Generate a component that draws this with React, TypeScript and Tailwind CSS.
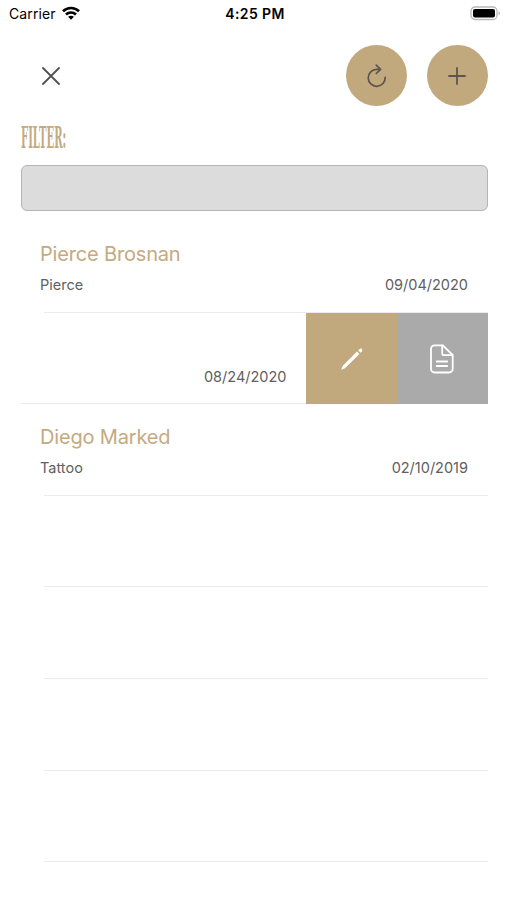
type Entry = { name?: string; kind?: string; date?: string; swiped?: boolean };

const entries: Entry[] = [
  { name: "Pierce Brosnan", kind: "Pierce", date: "09/04/2020" },
  { date: "08/24/2020", swiped: true },
  { name: "Diego Marked", kind: "Tattoo", date: "02/10/2019" },
  {},
  {},
  {},
  {},
];

function StatusBar() {
  return (
    <header className="grid h-7 grid-cols-3 items-center pr-[6px] pl-[9px] text-black">
      <div className="flex items-center gap-[6px]">
        <span className="text-[14px] leading-7 tracking-[0.1px]">Carrier</span>
        <svg className="mb-[2px]" width="18" height="14" viewBox="0 0 18 14" fill="none" stroke="currentColor" strokeWidth="2.7">
          <path d="M1 5.2C5.5.9 12.5.9 17 5.2" />
          <path d="M4 8.5c2.8-2.7 7.2-2.7 10 0" />
          <path d="M9 13.7 6.1 10.8c1.6-1.5 4.2-1.5 5.8 0Z" fill="currentColor" stroke="none" />
        </svg>
      </div>
      <span className="text-center text-[14px] leading-7 font-semibold tracking-[0.4px]">4:25 PM</span>
      <svg className="mb-[2px] justify-self-end" width="31" height="15" viewBox="0 0 31 15">
        <rect x="1" y="1" width="26" height="12.5" rx="4" fill="white" stroke="#b9b9b9" strokeWidth="1.3" />
        <rect x="3" y="3" width="22" height="8.6" rx="2" fill="black" />
        <path d="M28.5 5.2c2 .8 2 3.3 0 4.2Z" fill="#b5b5b5" />
      </svg>
    </header>
  );
}

function Toolbar() {
  return (
    <div className="mt-[17px] flex h-[61px] items-center pr-[19.5px] pl-[42px]">
      <button aria-label="Close">
        <svg width="18" height="18" viewBox="0 0 18 18" stroke="#505054" strokeWidth="1.8" strokeLinecap="round">
          <path d="m1 1 16 16M17 1 1 17" />
        </svg>
      </button>
      <div className="ml-auto flex gap-[19.5px]">
        <button aria-label="Reload" className="flex size-[61px] items-center justify-center rounded-full bg-[#c1a97d]">
          <svg width="20" height="24" viewBox="0 0 20 24" fill="none" stroke="#5b554c" strokeWidth="1.7" strokeLinecap="round" strokeLinejoin="round">
            <path d="M18.2 13.3A8.5 8.5 0 1 1 9.8 5.3H13" />
            <path d="m9.3 1.1 4.2 4.2-4.2 4.2" />
          </svg>
        </button>
        <button aria-label="Add" className="flex size-[61px] items-center justify-center rounded-full bg-[#c1a97d]">
          <svg width="18" height="18" viewBox="0 0 18 18" stroke="#5b554c" strokeWidth="1.8" strokeLinecap="round">
            <path d="M9 1v16M1 9h16" />
          </svg>
        </button>
      </div>
    </div>
  );
}

function SwipeActions() {
  return (
    <div className="flex h-full">
      <button aria-label="Edit" className="flex w-[91px] items-center justify-center bg-[#c1a97d] pt-[2px]">
        <svg width="24" height="24" viewBox="0 0 24 24" fill="white">
          <path d="m1.2 22.7 1.4-3.8L17 4.5l2.4 2.4L5 21.3Z" />
          <path d="m18.2 3.4 1.5-1.4c1.5-1.3 3.6.8 2.3 2.3l-1.4 1.5Z" />
        </svg>
      </button>
      <button aria-label="Notes" className="flex w-[90.5px] items-center justify-center bg-[#aaaaaa] pt-[2px]">
        <svg width="24" height="30" viewBox="0 0 24 30" fill="none" stroke="white" strokeWidth="1.8" strokeLinecap="round" strokeLinejoin="round">
          <path d="M4.5 1.3h8.3L22.7 11v14a3.5 3.5 0 0 1-3.5 3.5H4.5A3.5 3.5 0 0 1 1 25V4.8a3.5 3.5 0 0 1 3.5-3.5Z" />
          <path d="M12.2 1.5v7.7a2 2 0 0 0 2 2h8.2M6.7 17.5h10.5M6.7 22h10.5" />
        </svg>
      </button>
    </div>
  );
}

function Row({ entry }: { entry: Entry }) {
  if (entry.swiped) {
    return (
      <li className="flex h-[91.6px] justify-end">
        <div className="flex flex-1 items-start justify-end border-b border-[#e8e8e8] pt-[54px] pr-[19.5px]">
          <span className="text-[14.5px] leading-5 text-[#606060]">{entry.date}</span>
        </div>
        <SwipeActions />
      </li>
    );
  }
  return (
    <li className="flex h-[91.6px] flex-col pt-5">
      <h2 className="h-[27px] px-[19.5px] text-[20px] leading-[27px] font-normal tracking-[-0.17px] text-[#c3aa80]">
        {entry.name}
      </h2>
      <div className="mt-[7px] flex h-5 justify-between px-[19.5px] text-[14.5px] leading-5 text-[#606060]">
        <span>{entry.kind}</span>
        <span>{entry.date}</span>
      </div>
      <div className="mt-auto ml-[23.5px] border-b border-[#ececec]" />
    </li>
  );
}

export default function App() {
  return (
    <main className="h-[900px] w-[507px] overflow-hidden bg-white font-['Inter','Liberation_Sans',sans-serif]">
      <StatusBar />
      <Toolbar />
      <section className="mr-[19.5px] ml-[20.5px]">
        <div className="h-[59px] w-[45px] pt-[18px]">
          <label
            htmlFor="filter"
            className="block w-max origin-left scale-x-[0.335] font-['DejaVu_Serif',serif] text-[30px] leading-[28px] font-bold text-[#c3aa80]"
          >
            FILTER:
          </label>
        </div>
        <input
          id="filter"
          className="block h-[46px] w-full rounded-[6px] border border-[#b4b4b4] bg-[#dcdcdc] px-3 outline-none"
        />
        <ul className="mt-[10px]">
          {entries.map((entry, i) => (
            <Row key={i} entry={entry} />
          ))}
        </ul>
      </section>
    </main>
  );
}
